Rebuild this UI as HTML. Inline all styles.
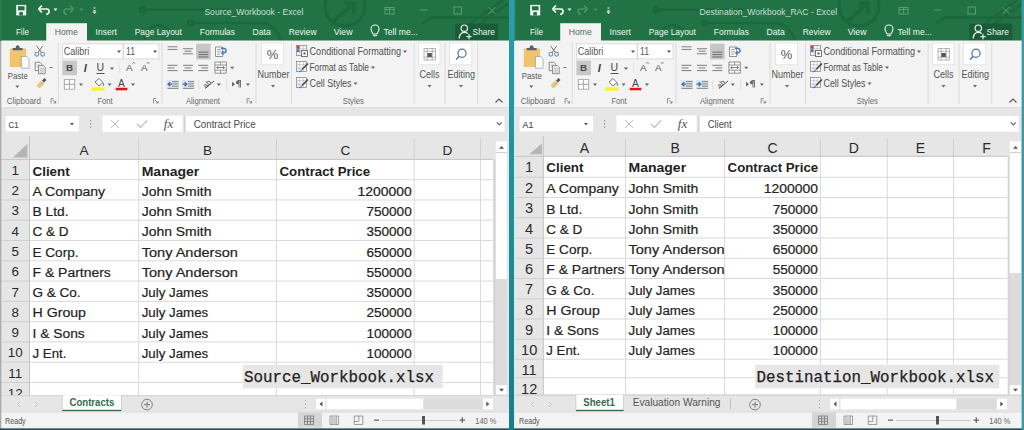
<!DOCTYPE html>
<html><head><meta charset="utf-8"><style>
html,body{margin:0;padding:0;background:#fff;overflow:hidden;width:1024px;height:430px}
svg{display:block}
text{white-space:pre}
</style></head><body>
<svg width="1024" height="430" viewBox="0 0 1024 430" font-family='"Liberation Sans", sans-serif'>
<rect x="0" y="0" width="1024" height="430" fill="#f3f3f3"/>
<g><rect x="0" y="0" width="509" height="41" fill="#217346" />
<g stroke="#1c673d" stroke-width="2.4" fill="none">
<path d="M142.3,9.7 L230,9.7"/><circle cx="142.3" cy="9.7" r="2.6"/>
<path d="M190.6,23 L264,23 Q273,24 282,41"/><circle cx="190.6" cy="23" r="2.6"/>
<path d="M145,41 A13.5,13.5 0 0 1 170,32"/>
<circle cx="345" cy="6" r="20" stroke-width="3"/>
<path d="M334,21 L353,4 M344,3.5 L354,3.5 L354,13.5" stroke-width="3.5"/>
<path d="M422,24 L431,17.5 L509,17.5"/>
<path d="M470,24 L503,0 M480,24 L509,3"/>
</g>
<rect x="16.2" y="4.9" width="10" height="10.5" fill="#f2f7f4" />
<rect x="18" y="6.2" width="6.6" height="4.2" fill="#217346" />
<rect x="19.3" y="12" width="3.6" height="3.4" fill="#217346" />
<path d="M39,9 L47,9 Q49,9 49,11.5 Q49,14 46,14.5" fill="none" stroke="#f2f7f4" stroke-width="1.7"/>
<path d="M38.5,9 L42,5.5 M38.5,9 L42,12.5" fill="none" stroke="#f2f7f4" stroke-width="1.7"/>
<path d="M53.5,8.5 L57.5,8.5 L55.5,11.0 Z" fill="#f2f7f4"/>
<path d="M73,9 L66,9 Q64,9 64,11.5 Q64,14 67,14.5" fill="none" stroke="#4e9169" stroke-width="1.7"/>
<path d="M73.5,9 L70,5.5 M73.5,9 L70,12.5" fill="none" stroke="#4e9169" stroke-width="1.7"/>
<path d="M79.5,8.5 L83.5,8.5 L81.5,11.0 Z" fill="#4e9169"/>
<rect x="93.5" y="7.5" width="2" height="1" fill="#f2f7f4" /><rect x="93.5" y="10" width="2" height="1" fill="#f2f7f4" /><path d="M92.5,11.5 L96.5,11.5 L94.5,14.0 Z" fill="#f2f7f4"/>
<text x="204.4" y="14.8" font-size="9" fill="#c9dfd1" text-anchor="start" font-family='"Liberation Sans", sans-serif' textLength="99.1" lengthAdjust="spacingAndGlyphs" >Source_Workbook - Excel</text>
<g fill="none" stroke="#5d9a76" stroke-width="1">
<rect x="385" y="7.5" width="9" height="6.5"/><path d="M385,9.5 h9 M389.5,7.5 v6.5"/>
<path d="M420,10 h7.5"/>
<rect x="454" y="7" width="7.5" height="7"/>
<path d="M488.5,7 L495.5,14 M495.5,7 L488.5,14"/>
</g>
<rect x="46.2" y="23.2" width="40.8" height="18" fill="#f3f3f3" />
<text x="15.9" y="35.0" font-size="9.3" fill="#eef5f0" text-anchor="start" font-family='"Liberation Sans", sans-serif' textLength="13.1" lengthAdjust="spacingAndGlyphs" >File</text>
<text x="95.6" y="35.0" font-size="9.3" fill="#eef5f0" text-anchor="start" font-family='"Liberation Sans", sans-serif' textLength="21.4" lengthAdjust="spacingAndGlyphs" >Insert</text>
<text x="134.7" y="35.0" font-size="9.3" fill="#eef5f0" text-anchor="start" font-family='"Liberation Sans", sans-serif' textLength="47.2" lengthAdjust="spacingAndGlyphs" >Page Layout</text>
<text x="199.8" y="35.0" font-size="9.3" fill="#eef5f0" text-anchor="start" font-family='"Liberation Sans", sans-serif' textLength="35.2" lengthAdjust="spacingAndGlyphs" >Formulas</text>
<text x="252.5" y="35.0" font-size="9.3" fill="#eef5f0" text-anchor="start" font-family='"Liberation Sans", sans-serif' textLength="18.3" lengthAdjust="spacingAndGlyphs" >Data</text>
<text x="288.7" y="35.0" font-size="9.3" fill="#eef5f0" text-anchor="start" font-family='"Liberation Sans", sans-serif' textLength="27.9" lengthAdjust="spacingAndGlyphs" >Review</text>
<text x="333.7" y="35.0" font-size="9.3" fill="#eef5f0" text-anchor="start" font-family='"Liberation Sans", sans-serif' textLength="18.8" lengthAdjust="spacingAndGlyphs" >View</text>
<text x="383.5" y="35.0" font-size="9.3" fill="#eef5f0" text-anchor="start" font-family='"Liberation Sans", sans-serif' textLength="34.3" lengthAdjust="spacingAndGlyphs" >Tell me...</text>
<text x="54.8" y="35.0" font-size="9.3" fill="#566b5d" text-anchor="start" font-family='"Liberation Sans", sans-serif' textLength="23.1" lengthAdjust="spacingAndGlyphs" >Home</text>
<path d="M373,34 Q371,31 371,29 A4,4 0 0 1 379,29 Q379,31 377,34 Z" fill="none" stroke="#eef5f0" stroke-width="1.1"/>
<rect x="373.2" y="35" width="3.6" height="1.2" fill="#eef5f0" />
<rect x="455.3" y="23.6" width="43" height="16.6" fill="#1a5c37" />
<circle cx="464.3" cy="28.2" r="3.2" fill="none" stroke="#eef5f0" stroke-width="1.2"/>
<path d="M459.2,38.5 Q459.5,32.3 464.3,32.3 Q466.5,32.3 467.8,33.6" fill="none" stroke="#eef5f0" stroke-width="1.2"/>
<rect x="466.3" y="36.1" width="5.4" height="1.1" fill="#eef5f0" /><rect x="468.45" y="33.9" width="1.1" height="5.4" fill="#eef5f0" />
<text x="472.6" y="35.2" font-size="9.6" fill="#eef5f0" text-anchor="start" font-family='"Liberation Sans", sans-serif' textLength="22.2" lengthAdjust="spacingAndGlyphs" >Share</text>
<rect x="0" y="40.5" width="509" height="66.5" fill="#f3f3f3" />
<text x="6.7" y="104.3" font-size="8.8" fill="#6a6a6a" text-anchor="start" font-family='"Liberation Sans", sans-serif' textLength="34.3" lengthAdjust="spacingAndGlyphs" >Clipboard</text>
<text x="97.4" y="104.3" font-size="8.8" fill="#6a6a6a" text-anchor="start" font-family='"Liberation Sans", sans-serif' textLength="15.3" lengthAdjust="spacingAndGlyphs" >Font</text>
<text x="186" y="104.3" font-size="8.8" fill="#6a6a6a" text-anchor="start" font-family='"Liberation Sans", sans-serif' textLength="34" lengthAdjust="spacingAndGlyphs" >Alignment</text>
<text x="342.8" y="104.3" font-size="8.8" fill="#6a6a6a" text-anchor="start" font-family='"Liberation Sans", sans-serif' textLength="21" lengthAdjust="spacingAndGlyphs" >Styles</text>
<rect x="57.8" y="43" width="1" height="61" fill="#dcdcdc" />
<rect x="161.5" y="43" width="1" height="61" fill="#dcdcdc" />
<rect x="255.5" y="43" width="1" height="61" fill="#dcdcdc" />
<rect x="291" y="43" width="1" height="61" fill="#dcdcdc" />
<rect x="413.6" y="43" width="1" height="61" fill="#dcdcdc" />
<rect x="444.6" y="43" width="1" height="61" fill="#dcdcdc" />
<rect x="477.2" y="43" width="1" height="61" fill="#dcdcdc" />
<path d="M51.1,98.5 h2.5 v0 M51.1,98.5 v5 M52.6,100 L55.6,103 M55.6,101 v2 h-2" fill="none" stroke="#777" stroke-width="0.8"/>
<path d="M153.5,98.5 h2.5 v0 M153.5,98.5 v5 M155,100 L158,103 M158,101 v2 h-2" fill="none" stroke="#777" stroke-width="0.8"/>
<path d="M247.1,98.5 h2.5 v0 M247.1,98.5 v5 M248.6,100 L251.6,103 M251.6,101 v2 h-2" fill="none" stroke="#777" stroke-width="0.8"/>
<path d="M495.5,102.5 L499,99 L502.5,102.5" fill="none" stroke="#555" stroke-width="1.1"/>
<rect x="9.8" y="48.4" width="16.3" height="18.6" rx="0.8" fill="#efc46c"/>
<path d="M12.7,50.3 h9.9 v-2.3 h-3 v-1.2 a2,2 0 0 0 -3.9,0 v1.2 h-3 Z" fill="#5a5c68"/>
<path d="M21.4,56.5 h5.3 l2.3,2.3 v9.4 h-7.6 Z" fill="#fff" stroke="#8a8a8a" stroke-width="0.6"/>
<text x="7.8" y="79.2" font-size="9.8" fill="#555" text-anchor="start" font-family='"Liberation Sans", sans-serif' textLength="20" lengthAdjust="spacingAndGlyphs" >Paste</text>
<path d="M15.3,85.5 L19.3,85.5 L17.3,88.0 Z" fill="#666"/>
<g fill="none" stroke="#6f8fb5" stroke-width="1.1"><circle cx="36.8" cy="54.2" r="1.9"/><circle cx="42.6" cy="54.2" r="1.9"/></g>
<path d="M38,52.6 L42.8,45.8 M41.4,52.6 L36.6,45.8" stroke="#707070" stroke-width="1" fill="none"/>
<path d="M35.2,62.3 h4.8 l1.8,1.8 v6.5 h-6.6 Z" fill="#f7f7f7" stroke="#707070" stroke-width="0.8"/>
<path d="M36.5,65 h3.5 M36.5,67 h3.5" stroke="#999" stroke-width="0.6"/>
<path d="M38.6,65.6 h4.8 l1.8,1.8 v6.3 h-6.6 Z" fill="#f7f7f7" stroke="#707070" stroke-width="0.8"/>
<path d="M39.9,68.4 h4 M39.9,70.2 h4 M39.9,72 h4" stroke="#888" stroke-width="0.6"/>
<rect x="49.5" y="67" width="3" height="0.9" fill="#666" />
<path d="M36.5,85.5 L41.5,80.5 L44.5,83.5 L39.5,88.5 Z" fill="#e6c27f"/><path d="M42,80.5 L44.5,78 L46.5,80 L44,82.5 Z" fill="#555"/>
<rect x="62.7" y="43.9" width="60.3" height="15" fill="#fff" stroke="#d4d4d4" stroke-width="0.8"/>
<rect x="123.8" y="43.9" width="35.2" height="15" fill="#fff" stroke="#d4d4d4" stroke-width="0.8"/>
<text x="63.8" y="55" font-size="10" fill="#555" text-anchor="start" font-family='"Liberation Sans", sans-serif' textLength="25.5" lengthAdjust="spacingAndGlyphs" >Calibri</text>
<text x="126" y="55" font-size="10" fill="#555" text-anchor="start" font-family='"Liberation Sans", sans-serif' textLength="9" lengthAdjust="spacingAndGlyphs" >11</text>
<path d="M117,50.5 L121,50.5 L119,53.0 Z" fill="#555"/>
<path d="M153,50.5 L157,50.5 L155,53.0 Z" fill="#555"/>
<rect x="62.4" y="60.6" width="14.6" height="14.6" fill="#c8c8c8" />
<text x="69.5" y="71.3" font-size="9.8" fill="#484848" font-weight="bold" text-anchor="middle" font-family='"Liberation Sans", sans-serif' >B</text>
<text x="85.3" y="71.5" font-size="11" fill="#444" font-weight="bold" text-anchor="middle" font-family='"Liberation Sans", sans-serif' font-style="italic">I</text>
<text x="100.4" y="71" font-size="10.5" fill="#444" text-anchor="middle" font-family='"Liberation Sans", sans-serif' >U</text>
<rect x="96.5" y="73" width="8" height="0.9" fill="#444" />
<path d="M110,67.5 L114,67.5 L112,70.0 Z" fill="#666"/>
<rect x="119.3" y="63" width="0.8" height="10" fill="#ddd" />
<text x="129.3" y="71.3" font-size="9.8" fill="#555" text-anchor="middle" font-family='"Liberation Sans", sans-serif' >A</text>
<text x="144.2" y="71.3" font-size="9.8" fill="#555" text-anchor="middle" font-family='"Liberation Sans", sans-serif' >A</text>
<path d="M132.5,63.5 l1.2,-1.2 l1.2,1.2 M147,62.3 l1.2,1.2 l1.2,-1.2" fill="none" stroke="#555" stroke-width="0.9"/>
<rect x="64.4" y="79.5" width="10.2" height="9.7" fill="#fff"/><path d="M64.4,79.5 h10.2 v9.7 h-10.2 Z M69.5,79.5 v9.7 M64.4,84.35 h10.2" fill="none" stroke="#b0b0b0" stroke-width="1.1"/>
<path d="M79,83.5 L83,83.5 L81,86.0 Z" fill="#666"/>
<path d="M95,82 L99,78.5 L103,82.5 L99,86 Z" fill="#fff" stroke="#666" stroke-width="0.9"/><path d="M103,83 q1.5,2 0,3" fill="#5f86b8" stroke="#5f86b8" stroke-width="1"/>
<rect x="91.3" y="87.3" width="13.1" height="3.4" fill="#f4f42a" />
<path d="M107.6,83.5 L111.6,83.5 L109.6,86.0 Z" fill="#666"/>
<text x="121.3" y="86.5" font-size="10.2" fill="#444" text-anchor="middle" font-family='"Liberation Sans", sans-serif' >A</text>
<rect x="115.7" y="87.8" width="11.7" height="2.5" fill="#e0141c" />
<path d="M131,83.5 L135,83.5 L133,86.0 Z" fill="#666"/>
<rect x="167.5" y="46.2" width="10" height="1.1" fill="#8a8a8a" /><rect x="167.5" y="48.9" width="10" height="1.1" fill="#8a8a8a" />
<rect x="183" y="48.2" width="10" height="1.1" fill="#888" /><rect x="184.5" y="50.7" width="7" height="1.1" fill="#888" /><rect x="183" y="53.2" width="10" height="1.1" fill="#888" />
<rect x="196.1" y="43.7" width="14.6" height="15.7" fill="#c6c6c6" />
<rect x="198.4" y="51.6" width="10" height="1.1" fill="#707070" /><rect x="198.4" y="54" width="10" height="1.1" fill="#707070" /><rect x="198.4" y="56.4" width="10" height="1.1" fill="#707070" />
<path d="M215.5,47 h7.2 v9.5 h-7.2 Z" fill="#fff" stroke="#777" stroke-width="0.8"/><path d="M217,49.5 h4 M217,51.8 h4 M217,54.1 h3" stroke="#888" stroke-width="0.8"/><path d="M221,48.3 q5,-0.5 5.2,2.5 q0,2 -3,2.2" fill="none" stroke="#3e74b4" stroke-width="1.3"/><path d="M223.5,51.2 l-1.8,1.8 l1.8,1.6" fill="none" stroke="#3e74b4" stroke-width="1.1"/>
<rect x="167.5" y="64.8" width="10" height="1.1" fill="#888" /><rect x="167.5" y="67.4" width="7" height="1.1" fill="#888" /><rect x="167.5" y="70" width="10" height="1.1" fill="#888" />
<rect x="183" y="64.8" width="10" height="1.1" fill="#888" /><rect x="184.5" y="67.4" width="7" height="1.1" fill="#888" /><rect x="183" y="70" width="10" height="1.1" fill="#888" />
<rect x="198.3" y="64.8" width="10" height="1.1" fill="#888" /><rect x="201.3" y="67.4" width="7" height="1.1" fill="#888" /><rect x="198.3" y="70" width="10" height="1.1" fill="#888" />
<path d="M214.9,62 h11.4 v11.2 h-11.4 Z M214.9,65 h11.4 M214.9,70.2 h11.4 M220.6,62 v3 M220.6,70.2 v3" fill="#fff" stroke="#777" stroke-width="0.8"/><path d="M216.8,67.6 h7.6 M216.8,67.6 l1.5,-1.3 M216.8,67.6 l1.5,1.3 M224.4,67.6 l-1.5,-1.3 M224.4,67.6 l-1.5,1.3" stroke="#555" stroke-width="0.8" fill="none"/>
<path d="M230.2,66.8 L234.2,66.8 L232.2,69.3 Z" fill="#666"/>
<rect x="166.5" y="80" width="12.5" height="9" fill="#dde6f0" />
<rect x="172" y="81" width="6.5" height="1.1" fill="#8a8a8a" /><rect x="172" y="83.3" width="6.5" height="1.1" fill="#8a8a8a" /><rect x="172" y="85.6" width="6.5" height="1.1" fill="#8a8a8a" />
<rect x="167.5" y="87.9" width="11" height="1" fill="#8a8a8a" />
<path d="M172,84.2 h-4.2 M170.3,82.2 l-2.2,2 l2.2,2" fill="none" stroke="#3b6ea8" stroke-width="1.3"/>
<rect x="182" y="80" width="12.5" height="9" fill="#dde6f0" />
<rect x="188" y="81" width="6" height="1.1" fill="#8a8a8a" /><rect x="188" y="83.3" width="6" height="1.1" fill="#8a8a8a" /><rect x="188" y="85.6" width="6" height="1.1" fill="#8a8a8a" />
<rect x="183" y="87.9" width="11" height="1" fill="#8a8a8a" />
<path d="M182.5,84.2 h4.2 M184.6,82.2 l2.2,2 l-2.2,2" fill="none" stroke="#3b6ea8" stroke-width="1.3"/>
<rect x="198.5" y="79.5" width="0.8" height="10" fill="#dcdcdc" />
<text x="207" y="86.5" font-size="7.5" fill="#555" text-anchor="middle" font-family='"Liberation Sans", sans-serif' transform="rotate(-45 207 84)">ab</text>
<path d="M205,88.5 L214,81" stroke="#555" stroke-width="1"/>
<path d="M216.8,83.5 L220.8,83.5 L218.8,86.0 Z" fill="#666"/>
<rect x="226.4" y="79.5" width="0.8" height="10" fill="#dcdcdc" />
<path d="M232,81.8 l3,2.4 l-3,2.4 Z" fill="#666"/><path d="M237.5,80.5 h3.5 M239,80.5 v7 M240.5,80.5 v7" stroke="#666" stroke-width="0.9"/><circle cx="237.6" cy="82.5" r="1.7" fill="#666"/>
<path d="M245.9,83.5 L249.9,83.5 L247.9,86.0 Z" fill="#666"/>
<rect x="261.7" y="43" width="21.8" height="21.8" fill="#fff" stroke="#e0e0e0" stroke-width="0.8"/>
<text x="272.6" y="59" font-size="13" fill="#555" text-anchor="middle" font-family='"Liberation Sans", sans-serif' >%</text>
<text x="257.5" y="78.3" font-size="10.3" fill="#555" text-anchor="start" font-family='"Liberation Sans", sans-serif' textLength="31.9" lengthAdjust="spacingAndGlyphs" >Number</text>
<path d="M271,85 L275,85 L273,87.5 Z" fill="#666"/>
<rect x="296.5" y="45.5" width="10" height="10" fill="#fff" stroke="#888" stroke-width="0.8"/>
<path d="M296.5,48.8 h10 M296.5,52.1 h10 M299.8,45.5 v10 M303.2,45.5 v10" stroke="#aaa" stroke-width="0.6"/>
<text x="309.5" y="55" font-size="10" fill="#505050" text-anchor="start" font-family='"Liberation Sans", sans-serif' textLength="91.5" lengthAdjust="spacingAndGlyphs" >Conditional Formatting</text>
<path d="M403.0,50.5 L407.0,50.5 L405.0,53.0 Z" fill="#666"/>
<rect x="296.5" y="61.5" width="10" height="10" fill="#fff" stroke="#888" stroke-width="0.8"/>
<path d="M296.5,64.8 h10 M296.5,68.1 h10 M299.8,61.5 v10 M303.2,61.5 v10" stroke="#aaa" stroke-width="0.6"/>
<text x="309.5" y="71" font-size="10" fill="#505050" text-anchor="start" font-family='"Liberation Sans", sans-serif' textLength="59.5" lengthAdjust="spacingAndGlyphs" >Format as Table</text>
<path d="M371.0,66.5 L375.0,66.5 L373.0,69.0 Z" fill="#666"/>
<rect x="296.5" y="77.5" width="10" height="10" fill="#fff" stroke="#888" stroke-width="0.8"/>
<path d="M296.5,80.8 h10 M296.5,84.1 h10 M299.8,77.5 v10 M303.2,77.5 v10" stroke="#aaa" stroke-width="0.6"/>
<text x="309.5" y="87" font-size="10" fill="#505050" text-anchor="start" font-family='"Liberation Sans", sans-serif' textLength="42" lengthAdjust="spacingAndGlyphs" >Cell Styles</text>
<path d="M353.5,82.5 L357.5,82.5 L355.5,85.0 Z" fill="#666"/>
<rect x="297" y="45.8" width="2.6" height="3" fill="#d23b3b" /><rect x="297" y="49.3" width="2.6" height="2.6" fill="#3b78c4" />
<rect x="301.5" y="50.5" width="6" height="6" fill="#fff" stroke="#555" stroke-width="0.8"/><rect x="303.5" y="52.5" width="2" height="2" fill="#555"/>
<path d="M302.5,69.0 L308,63.5" stroke="#444" stroke-width="1.6"/><path d="M299.5,72.0 L302.5,69.0 L301.3,71.0 Z" fill="#3b78c4" stroke="#3b78c4" stroke-width="1"/>
<rect x="297.5" y="67.5" width="4" height="3" fill="#c9daf0" />
<path d="M302.5,85.0 L308,79.5" stroke="#444" stroke-width="1.6"/><path d="M299.5,88.0 L302.5,85.0 L301.3,87.0 Z" fill="#3b78c4" stroke="#3b78c4" stroke-width="1"/>
<rect x="297.5" y="83.5" width="4" height="3" fill="#c9daf0" />
<rect x="418.6" y="43" width="21.4" height="21.8" fill="#fff" stroke="#e0e0e0" stroke-width="0.8"/>
<path d="M424,48.5 h11.5 v11.5 h-11.5 Z M424,51.3 h11.5 M424,57.2 h11.5 M427.2,48.5 v11.5 M432.2,48.5 v11.5" fill="none" stroke="#999" stroke-width="0.7"/><rect x="427.4" y="53" width="4.4" height="4" fill="#555"/>
<text x="429.5" y="78.3" font-size="10.3" fill="#555" text-anchor="middle" font-family='"Liberation Sans", sans-serif' textLength="20" lengthAdjust="spacingAndGlyphs" >Cells</text>
<path d="M427.5,85 L431.5,85 L429.5,87.5 Z" fill="#666"/>
<rect x="449.4" y="43" width="22.4" height="21.8" fill="#fff" stroke="#e0e0e0" stroke-width="0.8"/>
<circle cx="462" cy="53.3" r="4.1" fill="none" stroke="#4f7099" stroke-width="1.2"/><path d="M459.1,56.3 L456.2,59.4" stroke="#4f7099" stroke-width="1.5"/>
<text x="461.2" y="78.3" font-size="10.3" fill="#555" text-anchor="middle" font-family='"Liberation Sans", sans-serif' textLength="27.5" lengthAdjust="spacingAndGlyphs" >Editing</text>
<path d="M459,85 L463,85 L461,87.5 Z" fill="#666"/>
<rect x="0" y="107.6" width="509" height="24.400000000000006" fill="#e6e6e6" />
<rect x="0" y="105.6" width="509" height="1.3" fill="#fbfbfb" />
<rect x="0" y="106.9" width="509" height="0.9" fill="#d9d9d9" />
<rect x="5.1" y="115.6" width="74.4" height="16.3" fill="#fff" stroke="#dedede" stroke-width="0.6"/>
<text x="8.6" y="127.6" font-size="9.4" fill="#505050" text-anchor="start" font-family='"Liberation Sans", sans-serif' textLength="10" lengthAdjust="spacingAndGlyphs" stroke="#505050" stroke-width="0.15">C1</text>
<path d="M70,123 L74,123 L72,125.5 Z" fill="#555"/>
<rect x="90" y="120" width="1.2" height="1.4" fill="#999" /><rect x="90" y="123.2" width="1.2" height="1.4" fill="#999" /><rect x="90" y="126.4" width="1.2" height="1.4" fill="#999" />
<rect x="102.5" y="115.5" width="80" height="16.5" fill="#fff"/>
<path d="M111,120 L119,128 M119,120 L111,128" stroke="#bbb" stroke-width="1"/>
<path d="M137,124 L140.5,127.5 L147,120.5" fill="none" stroke="#bbb" stroke-width="1.2"/>
<text x="163.8" y="127.8" font-size="11.5" fill="#555" text-anchor="start" font-family='"Liberation Serif", serif' textLength="9.5" lengthAdjust="spacingAndGlyphs" font-style="italic">fx</text>
<rect x="184" y="116" width="1" height="16" fill="#d0d0d0" />
<rect x="186" y="116" width="318.5" height="15.6" fill="#fff"/>
<text x="193.7" y="127.7" font-size="10" fill="#4a4a4a" text-anchor="start" font-family='"Liberation Sans", sans-serif' textLength="62" lengthAdjust="spacingAndGlyphs" >Contract Price</text>
<path d="M496.8,122.3 L499.3,124.8 L501.8,122.3" fill="none" stroke="#666" stroke-width="1.2"/>
<rect x="0" y="132" width="509" height="27.400000000000006" fill="#e6e6e6" />
<rect x="29.5" y="159.4" width="463.5" height="235.9" fill="#fff" />
<rect x="0" y="159.4" width="29.5" height="235.9" fill="#e6e6e6" />
<path d="M13,157.5 L27.4,143.8 L27.4,157.5 Z" fill="#b5b5b5"/>
<rect x="29.5" y="179.18" width="463.5" height="1" fill="#dadada" />
<rect x="0" y="179.18" width="29.5" height="1" fill="#d0d0d0" />
<rect x="29.5" y="199.46" width="463.5" height="1" fill="#dadada" />
<rect x="0" y="199.46" width="29.5" height="1" fill="#d0d0d0" />
<rect x="29.5" y="219.74" width="463.5" height="1" fill="#dadada" />
<rect x="0" y="219.74" width="29.5" height="1" fill="#d0d0d0" />
<rect x="29.5" y="240.02" width="463.5" height="1" fill="#dadada" />
<rect x="0" y="240.02" width="29.5" height="1" fill="#d0d0d0" />
<rect x="29.5" y="260.3" width="463.5" height="1" fill="#dadada" />
<rect x="0" y="260.3" width="29.5" height="1" fill="#d0d0d0" />
<rect x="29.5" y="280.58000000000004" width="463.5" height="1" fill="#dadada" />
<rect x="0" y="280.58000000000004" width="29.5" height="1" fill="#d0d0d0" />
<rect x="29.5" y="300.86" width="463.5" height="1" fill="#dadada" />
<rect x="0" y="300.86" width="29.5" height="1" fill="#d0d0d0" />
<rect x="29.5" y="321.14" width="463.5" height="1" fill="#dadada" />
<rect x="0" y="321.14" width="29.5" height="1" fill="#d0d0d0" />
<rect x="29.5" y="341.42" width="463.5" height="1" fill="#dadada" />
<rect x="0" y="341.42" width="29.5" height="1" fill="#d0d0d0" />
<rect x="29.5" y="361.70000000000005" width="463.5" height="1" fill="#dadada" />
<rect x="0" y="361.70000000000005" width="29.5" height="1" fill="#d0d0d0" />
<rect x="29.5" y="381.98" width="463.5" height="1" fill="#dadada" />
<rect x="0" y="381.98" width="29.5" height="1" fill="#d0d0d0" />
<rect x="29.5" y="402.26" width="463.5" height="1" fill="#dadada" />
<rect x="0" y="402.26" width="29.5" height="1" fill="#d0d0d0" />
<rect x="138.2" y="159.4" width="1" height="235.9" fill="#dadada" />
<rect x="138.2" y="139" width="1" height="20.400000000000006" fill="#d0d0d0" />
<rect x="276.0" y="159.4" width="1" height="235.9" fill="#dadada" />
<rect x="276.0" y="139" width="1" height="20.400000000000006" fill="#d0d0d0" />
<rect x="413.7" y="159.4" width="1" height="235.9" fill="#dadada" />
<rect x="413.7" y="139" width="1" height="20.400000000000006" fill="#d0d0d0" />
<rect x="480.0" y="159.4" width="1" height="235.9" fill="#dadada" />
<rect x="480.0" y="139" width="1" height="20.400000000000006" fill="#d0d0d0" />
<rect x="29.0" y="136" width="1" height="259.3" fill="#c4c4c4" />
<rect x="0" y="158.9" width="493" height="1" fill="#c4c4c4" />
<text x="84.1" y="154.8" font-size="13.6" fill="#2a2a2a" text-anchor="middle" font-family='"Liberation Sans", sans-serif' >A</text>
<text x="207.6" y="154.8" font-size="13.6" fill="#2a2a2a" text-anchor="middle" font-family='"Liberation Sans", sans-serif' >B</text>
<text x="345.35" y="154.8" font-size="13.6" fill="#2a2a2a" text-anchor="middle" font-family='"Liberation Sans", sans-serif' >C</text>
<text x="447.35" y="154.8" font-size="13.6" fill="#2a2a2a" text-anchor="middle" font-family='"Liberation Sans", sans-serif' >D</text>
<text x="15.25" y="174.9" font-size="13.4" fill="#2a2a2a" text-anchor="middle" font-family='"Liberation Sans", sans-serif' >1</text>
<text x="15.25" y="195.18" font-size="13.4" fill="#2a2a2a" text-anchor="middle" font-family='"Liberation Sans", sans-serif' >2</text>
<text x="15.25" y="215.46" font-size="13.4" fill="#2a2a2a" text-anchor="middle" font-family='"Liberation Sans", sans-serif' >3</text>
<text x="15.25" y="235.74" font-size="13.4" fill="#2a2a2a" text-anchor="middle" font-family='"Liberation Sans", sans-serif' >4</text>
<text x="15.25" y="256.02" font-size="13.4" fill="#2a2a2a" text-anchor="middle" font-family='"Liberation Sans", sans-serif' >5</text>
<text x="15.25" y="276.3" font-size="13.4" fill="#2a2a2a" text-anchor="middle" font-family='"Liberation Sans", sans-serif' >6</text>
<text x="15.25" y="296.58000000000004" font-size="13.4" fill="#2a2a2a" text-anchor="middle" font-family='"Liberation Sans", sans-serif' >7</text>
<text x="15.25" y="316.86" font-size="13.4" fill="#2a2a2a" text-anchor="middle" font-family='"Liberation Sans", sans-serif' >8</text>
<text x="15.25" y="337.14" font-size="13.4" fill="#2a2a2a" text-anchor="middle" font-family='"Liberation Sans", sans-serif' >9</text>
<text x="15.25" y="357.42" font-size="13.4" fill="#2a2a2a" text-anchor="middle" font-family='"Liberation Sans", sans-serif' >10</text>
<text x="15.25" y="377.70000000000005" font-size="13.4" fill="#2a2a2a" text-anchor="middle" font-family='"Liberation Sans", sans-serif' >11</text>
<text x="15.25" y="397.98" font-size="13.4" fill="#2a2a2a" text-anchor="middle" font-family='"Liberation Sans", sans-serif' >12</text>
<text x="32.5" y="175.5" font-size="13.7" fill="#222" font-weight="bold" text-anchor="start" font-family='"Liberation Sans", sans-serif' textLength="37.2" lengthAdjust="spacingAndGlyphs" >Client</text>
<text x="141.7" y="175.5" font-size="13.7" fill="#222" font-weight="bold" text-anchor="start" font-family='"Liberation Sans", sans-serif' textLength="57.6" lengthAdjust="spacingAndGlyphs" >Manager</text>
<text x="279.5" y="175.5" font-size="13.7" fill="#222" font-weight="bold" text-anchor="start" font-family='"Liberation Sans", sans-serif' textLength="90.6" lengthAdjust="spacingAndGlyphs" >Contract Price</text>
<text x="32.5" y="195.78" font-size="13.7" fill="#222" text-anchor="start" font-family='"Liberation Sans", sans-serif' textLength="72.6" lengthAdjust="spacingAndGlyphs" stroke="#222" stroke-width="0.2">A Company</text>
<text x="141.7" y="195.78" font-size="13.7" fill="#222" text-anchor="start" font-family='"Liberation Sans", sans-serif' textLength="69.8" lengthAdjust="spacingAndGlyphs" stroke="#222" stroke-width="0.2">John Smith</text>
<text x="411.7" y="195.78" font-size="13.7" fill="#222" text-anchor="end" font-family='"Liberation Sans", sans-serif' textLength="54.1" lengthAdjust="spacingAndGlyphs" stroke="#222" stroke-width="0.2">1200000</text>
<text x="32.5" y="216.06" font-size="13.7" fill="#222" text-anchor="start" font-family='"Liberation Sans", sans-serif' textLength="36" lengthAdjust="spacingAndGlyphs" stroke="#222" stroke-width="0.2">B Ltd.</text>
<text x="141.7" y="216.06" font-size="13.7" fill="#222" text-anchor="start" font-family='"Liberation Sans", sans-serif' textLength="69.8" lengthAdjust="spacingAndGlyphs" stroke="#222" stroke-width="0.2">John Smith</text>
<text x="411.7" y="216.06" font-size="13.7" fill="#222" text-anchor="end" font-family='"Liberation Sans", sans-serif' textLength="45.2" lengthAdjust="spacingAndGlyphs" stroke="#222" stroke-width="0.2">750000</text>
<text x="32.5" y="236.34" font-size="13.7" fill="#222" text-anchor="start" font-family='"Liberation Sans", sans-serif' textLength="36" lengthAdjust="spacingAndGlyphs" stroke="#222" stroke-width="0.2">C &amp; D</text>
<text x="141.7" y="236.34" font-size="13.7" fill="#222" text-anchor="start" font-family='"Liberation Sans", sans-serif' textLength="69.8" lengthAdjust="spacingAndGlyphs" stroke="#222" stroke-width="0.2">John Smith</text>
<text x="411.7" y="236.34" font-size="13.7" fill="#222" text-anchor="end" font-family='"Liberation Sans", sans-serif' textLength="45.2" lengthAdjust="spacingAndGlyphs" stroke="#222" stroke-width="0.2">350000</text>
<text x="32.5" y="256.62" font-size="13.7" fill="#222" text-anchor="start" font-family='"Liberation Sans", sans-serif' textLength="46" lengthAdjust="spacingAndGlyphs" stroke="#222" stroke-width="0.2">E Corp.</text>
<text x="141.7" y="256.62" font-size="13.7" fill="#222" text-anchor="start" font-family='"Liberation Sans", sans-serif' textLength="96.2" lengthAdjust="spacingAndGlyphs" stroke="#222" stroke-width="0.2">Tony Anderson</text>
<text x="411.7" y="256.62" font-size="13.7" fill="#222" text-anchor="end" font-family='"Liberation Sans", sans-serif' textLength="45.2" lengthAdjust="spacingAndGlyphs" stroke="#222" stroke-width="0.2">650000</text>
<text x="32.5" y="276.90000000000003" font-size="13.7" fill="#222" text-anchor="start" font-family='"Liberation Sans", sans-serif' textLength="78.3" lengthAdjust="spacingAndGlyphs" stroke="#222" stroke-width="0.2">F &amp; Partners</text>
<text x="141.7" y="276.90000000000003" font-size="13.7" fill="#222" text-anchor="start" font-family='"Liberation Sans", sans-serif' textLength="96.2" lengthAdjust="spacingAndGlyphs" stroke="#222" stroke-width="0.2">Tony Anderson</text>
<text x="411.7" y="276.90000000000003" font-size="13.7" fill="#222" text-anchor="end" font-family='"Liberation Sans", sans-serif' textLength="45.2" lengthAdjust="spacingAndGlyphs" stroke="#222" stroke-width="0.2">550000</text>
<text x="32.5" y="297.18000000000006" font-size="13.7" fill="#222" text-anchor="start" font-family='"Liberation Sans", sans-serif' textLength="48.1" lengthAdjust="spacingAndGlyphs" stroke="#222" stroke-width="0.2">G &amp; Co.</text>
<text x="141.7" y="297.18000000000006" font-size="13.7" fill="#222" text-anchor="start" font-family='"Liberation Sans", sans-serif' textLength="66.5" lengthAdjust="spacingAndGlyphs" stroke="#222" stroke-width="0.2">July James</text>
<text x="411.7" y="297.18000000000006" font-size="13.7" fill="#222" text-anchor="end" font-family='"Liberation Sans", sans-serif' textLength="45.2" lengthAdjust="spacingAndGlyphs" stroke="#222" stroke-width="0.2">350000</text>
<text x="32.5" y="317.46000000000004" font-size="13.7" fill="#222" text-anchor="start" font-family='"Liberation Sans", sans-serif' textLength="53.5" lengthAdjust="spacingAndGlyphs" stroke="#222" stroke-width="0.2">H Group</text>
<text x="141.7" y="317.46000000000004" font-size="13.7" fill="#222" text-anchor="start" font-family='"Liberation Sans", sans-serif' textLength="66.5" lengthAdjust="spacingAndGlyphs" stroke="#222" stroke-width="0.2">July James</text>
<text x="411.7" y="317.46000000000004" font-size="13.7" fill="#222" text-anchor="end" font-family='"Liberation Sans", sans-serif' textLength="45.2" lengthAdjust="spacingAndGlyphs" stroke="#222" stroke-width="0.2">250000</text>
<text x="32.5" y="337.74" font-size="13.7" fill="#222" text-anchor="start" font-family='"Liberation Sans", sans-serif' textLength="52.3" lengthAdjust="spacingAndGlyphs" stroke="#222" stroke-width="0.2">I &amp; Sons</text>
<text x="141.7" y="337.74" font-size="13.7" fill="#222" text-anchor="start" font-family='"Liberation Sans", sans-serif' textLength="66.5" lengthAdjust="spacingAndGlyphs" stroke="#222" stroke-width="0.2">July James</text>
<text x="411.7" y="337.74" font-size="13.7" fill="#222" text-anchor="end" font-family='"Liberation Sans", sans-serif' textLength="45.2" lengthAdjust="spacingAndGlyphs" stroke="#222" stroke-width="0.2">100000</text>
<text x="32.5" y="358.02000000000004" font-size="13.7" fill="#222" text-anchor="start" font-family='"Liberation Sans", sans-serif' textLength="33.9" lengthAdjust="spacingAndGlyphs" stroke="#222" stroke-width="0.2">J Ent.</text>
<text x="141.7" y="358.02000000000004" font-size="13.7" fill="#222" text-anchor="start" font-family='"Liberation Sans", sans-serif' textLength="66.5" lengthAdjust="spacingAndGlyphs" stroke="#222" stroke-width="0.2">July James</text>
<text x="411.7" y="358.02000000000004" font-size="13.7" fill="#222" text-anchor="end" font-family='"Liberation Sans", sans-serif' textLength="45.2" lengthAdjust="spacingAndGlyphs" stroke="#222" stroke-width="0.2">100000</text>
<rect x="493" y="132" width="16" height="263.3" fill="#e6e6e6" />
<rect x="493.5" y="159.4" width="2.3000000000000114" height="235.9" fill="#d4d4d4" />
<rect x="495.8" y="141.2" width="11" height="253.60000000000002" fill="#dcdcdc" />
<rect x="495.8" y="141.2" width="11" height="11.1" fill="#fff" />
<rect x="495.8" y="152.3" width="11" height="0.8" fill="#c8c8c8" />
<rect x="495.8" y="153.1" width="11" height="125.9" fill="#fff" />
<rect x="495.8" y="385.2" width="11" height="9.3" fill="#fff" />
<path d="M499.0,148.7 L501.5,146 L504.0,148.7 Z" fill="#555"/>
<path d="M499.0,388.8 L501.5,391.5 L504.0,388.8 Z" fill="#555"/>
<rect x="242.9" y="364.8" width="199.79999999999998" height="23.5" fill="#e6e6e6" />
<text x="244.1" y="381.9" font-size="15.8" fill="#222" text-anchor="start" font-family='"Liberation Mono", monospace' textLength="190" lengthAdjust="spacingAndGlyphs" stroke="#222" stroke-width="0.25">Source_Workbook.xlsx</text>
<rect x="0" y="395.3" width="509" height="17.099999999999966" fill="#e6e6e6" />
<rect x="0" y="395.3" width="509" height="0.8" fill="#cfcfcf" />
<path d="M20,402 L17.5,404.5 L20,407" fill="none" stroke="#c4c4c4" stroke-width="1"/>
<path d="M35,402 L37.5,404.5 L35,407" fill="none" stroke="#c4c4c4" stroke-width="1"/>
<rect x="62.3" y="395.3" width="59.0" height="15.5" fill="#fff" />
<rect x="61.8" y="395.3" width="0.8" height="15.5" fill="#c8c8c8" /><rect x="121.0" y="395.3" width="0.8" height="15.5" fill="#c8c8c8" />
<rect x="62.3" y="409.8" width="59.0" height="1.4" fill="#2f6b4b" />
<text x="69.5" y="405.7" font-size="10.3" fill="#356b4f" font-weight="bold" text-anchor="start" font-family='"Liberation Sans", sans-serif' textLength="44.8" lengthAdjust="spacingAndGlyphs" >Contracts</text>
<circle cx="147" cy="404.6" r="5.3" fill="none" stroke="#777" stroke-width="0.9"/><path d="M144,404.6 h6 M147,401.6 v6" stroke="#777" stroke-width="1"/>
<rect x="305" y="400" width="1" height="1.3" fill="#aaa" /><rect x="305" y="403.5" width="1" height="1.3" fill="#aaa" /><rect x="305" y="407" width="1" height="1.3" fill="#aaa" />
<rect x="316.2" y="398.6" width="177" height="10.7" fill="#dcdcdc" />
<rect x="316.2" y="398.6" width="9.1" height="10.7" fill="#fff" />
<rect x="326.4" y="398.6" width="96.80000000000001" height="10.7" fill="#fff" />
<rect x="482.8" y="398.6" width="10.2" height="10.7" fill="#fff" />
<path d="M322.5,401.5 L319.5,404 L322.5,406.5 Z" fill="#555"/>
<path d="M486.3,401.5 L489.3,404 L486.3,406.5 Z" fill="#555"/>
<rect x="0" y="412.4" width="509" height="16" fill="#f3f3f3" />
<rect x="0" y="411.6" width="509" height="0.8" fill="#dadada" />
<rect x="0" y="427.2" width="509" height="1.2" fill="#e9f0f3" />
<text x="5" y="424" font-size="9" fill="#555" text-anchor="start" font-family='"Liberation Sans", sans-serif' textLength="20.7" lengthAdjust="spacingAndGlyphs" >Ready</text>
<rect x="298" y="412.4" width="24" height="15.2" fill="#d5d5d5" />
<path d="M304.5,416 h9 v8.5 h-9 Z M304.5,418.8 h9 M304.5,421.6 h9 M307.5,416 v8.5 M310.5,416 v8.5" fill="none" stroke="#777" stroke-width="0.8"/>
<path d="M330,416 h8.5 v8.5 h-8.5 Z M332,416 v8.5 M336.5,416 v8.5" fill="none" stroke="#888" stroke-width="0.8"/><rect x="332" y="416.5" width="4.5" height="7.5" fill="#ccc"/>
<path d="M354.3,416 h8.5 v8.5 h-8.5 Z M354.3,421.5 h4.5 v-5.5" fill="none" stroke="#888" stroke-width="0.8"/>
<rect x="374" y="419.6" width="5" height="1.1" fill="#555" />
<rect x="382" y="420" width="74.7" height="0.8" fill="#bdbdbd" />
<rect x="422" y="416" width="3" height="8.5" fill="#555" />
<rect x="459.5" y="419.6" width="5.5" height="1.1" fill="#555" /><rect x="461.7" y="417.3" width="1.1" height="5.6" fill="#555" />
<text x="475.3" y="424" font-size="9" fill="#666" text-anchor="start" font-family='"Liberation Sans", sans-serif' textLength="21.1" lengthAdjust="spacingAndGlyphs" >140 %</text>
<rect x="0" y="0" width="1.3" height="41" fill="#2f7a52" />
<rect x="0" y="41" width="1.3" height="388" fill="#a9a9a9" />
<rect x="0" y="428.4" width="509" height="1.6" fill="#2b4a55" /></g>
<defs><linearGradient id="tg" x1="0" y1="0" x2="0" y2="1"><stop offset="0" stop-color="#2a9db0"/><stop offset="0.5" stop-color="#1a9097"/><stop offset="1" stop-color="#14808c"/></linearGradient></defs>
<rect x="509" y="0" width="5" height="430" fill="url(#tg)"/>
<g transform="translate(514,0)"><rect x="0" y="0" width="510" height="41" fill="#217346" />
<g stroke="#1c673d" stroke-width="2.4" fill="none">
<path d="M142.3,9.7 L230,9.7"/><circle cx="142.3" cy="9.7" r="2.6"/>
<path d="M190.6,23 L264,23 Q273,24 282,41"/><circle cx="190.6" cy="23" r="2.6"/>
<path d="M145,41 A13.5,13.5 0 0 1 170,32"/>
<circle cx="345" cy="6" r="20" stroke-width="3"/>
<path d="M334,21 L353,4 M344,3.5 L354,3.5 L354,13.5" stroke-width="3.5"/>
<path d="M422,24 L431,17.5 L509,17.5"/>
<path d="M470,24 L503,0 M480,24 L509,3"/>
</g>
<rect x="16.2" y="4.9" width="10" height="10.5" fill="#f2f7f4" />
<rect x="18" y="6.2" width="6.6" height="4.2" fill="#217346" />
<rect x="19.3" y="12" width="3.6" height="3.4" fill="#217346" />
<path d="M39,9 L47,9 Q49,9 49,11.5 Q49,14 46,14.5" fill="none" stroke="#f2f7f4" stroke-width="1.7"/>
<path d="M38.5,9 L42,5.5 M38.5,9 L42,12.5" fill="none" stroke="#f2f7f4" stroke-width="1.7"/>
<path d="M53.5,8.5 L57.5,8.5 L55.5,11.0 Z" fill="#f2f7f4"/>
<path d="M73,9 L66,9 Q64,9 64,11.5 Q64,14 67,14.5" fill="none" stroke="#4e9169" stroke-width="1.7"/>
<path d="M73.5,9 L70,5.5 M73.5,9 L70,12.5" fill="none" stroke="#4e9169" stroke-width="1.7"/>
<path d="M79.5,8.5 L83.5,8.5 L81.5,11.0 Z" fill="#4e9169"/>
<rect x="93.5" y="7.5" width="2" height="1" fill="#f2f7f4" /><rect x="93.5" y="10" width="2" height="1" fill="#f2f7f4" /><path d="M92.5,11.5 L96.5,11.5 L94.5,14.0 Z" fill="#f2f7f4"/>
<text x="185.6" y="14.8" font-size="9" fill="#c9dfd1" text-anchor="start" font-family='"Liberation Sans", sans-serif' textLength="137.5" lengthAdjust="spacingAndGlyphs" >Destination_Workbook_RAC - Excel</text>
<g fill="none" stroke="#5d9a76" stroke-width="1">
<rect x="385" y="7.5" width="9" height="6.5"/><path d="M385,9.5 h9 M389.5,7.5 v6.5"/>
<path d="M420,10 h7.5"/>
<rect x="454" y="7" width="7.5" height="7"/>
<path d="M488.5,7 L495.5,14 M495.5,7 L488.5,14"/>
</g>
<rect x="46.2" y="23.2" width="40.8" height="18" fill="#f3f3f3" />
<text x="15.9" y="35.0" font-size="9.3" fill="#eef5f0" text-anchor="start" font-family='"Liberation Sans", sans-serif' textLength="13.1" lengthAdjust="spacingAndGlyphs" >File</text>
<text x="95.6" y="35.0" font-size="9.3" fill="#eef5f0" text-anchor="start" font-family='"Liberation Sans", sans-serif' textLength="21.4" lengthAdjust="spacingAndGlyphs" >Insert</text>
<text x="134.7" y="35.0" font-size="9.3" fill="#eef5f0" text-anchor="start" font-family='"Liberation Sans", sans-serif' textLength="47.2" lengthAdjust="spacingAndGlyphs" >Page Layout</text>
<text x="199.8" y="35.0" font-size="9.3" fill="#eef5f0" text-anchor="start" font-family='"Liberation Sans", sans-serif' textLength="35.2" lengthAdjust="spacingAndGlyphs" >Formulas</text>
<text x="252.5" y="35.0" font-size="9.3" fill="#eef5f0" text-anchor="start" font-family='"Liberation Sans", sans-serif' textLength="18.3" lengthAdjust="spacingAndGlyphs" >Data</text>
<text x="288.7" y="35.0" font-size="9.3" fill="#eef5f0" text-anchor="start" font-family='"Liberation Sans", sans-serif' textLength="27.9" lengthAdjust="spacingAndGlyphs" >Review</text>
<text x="333.7" y="35.0" font-size="9.3" fill="#eef5f0" text-anchor="start" font-family='"Liberation Sans", sans-serif' textLength="18.8" lengthAdjust="spacingAndGlyphs" >View</text>
<text x="383.5" y="35.0" font-size="9.3" fill="#eef5f0" text-anchor="start" font-family='"Liberation Sans", sans-serif' textLength="34.3" lengthAdjust="spacingAndGlyphs" >Tell me...</text>
<text x="54.8" y="35.0" font-size="9.3" fill="#566b5d" text-anchor="start" font-family='"Liberation Sans", sans-serif' textLength="23.1" lengthAdjust="spacingAndGlyphs" >Home</text>
<path d="M373,34 Q371,31 371,29 A4,4 0 0 1 379,29 Q379,31 377,34 Z" fill="none" stroke="#eef5f0" stroke-width="1.1"/>
<rect x="373.2" y="35" width="3.6" height="1.2" fill="#eef5f0" />
<rect x="455.3" y="23.6" width="43" height="16.6" fill="#1a5c37" />
<circle cx="464.3" cy="28.2" r="3.2" fill="none" stroke="#eef5f0" stroke-width="1.2"/>
<path d="M459.2,38.5 Q459.5,32.3 464.3,32.3 Q466.5,32.3 467.8,33.6" fill="none" stroke="#eef5f0" stroke-width="1.2"/>
<rect x="466.3" y="36.1" width="5.4" height="1.1" fill="#eef5f0" /><rect x="468.45" y="33.9" width="1.1" height="5.4" fill="#eef5f0" />
<text x="472.6" y="35.2" font-size="9.6" fill="#eef5f0" text-anchor="start" font-family='"Liberation Sans", sans-serif' textLength="22.2" lengthAdjust="spacingAndGlyphs" >Share</text>
<rect x="0" y="40.5" width="510" height="66.5" fill="#f3f3f3" />
<text x="6.7" y="104.3" font-size="8.8" fill="#6a6a6a" text-anchor="start" font-family='"Liberation Sans", sans-serif' textLength="34.3" lengthAdjust="spacingAndGlyphs" >Clipboard</text>
<text x="97.4" y="104.3" font-size="8.8" fill="#6a6a6a" text-anchor="start" font-family='"Liberation Sans", sans-serif' textLength="15.3" lengthAdjust="spacingAndGlyphs" >Font</text>
<text x="186" y="104.3" font-size="8.8" fill="#6a6a6a" text-anchor="start" font-family='"Liberation Sans", sans-serif' textLength="34" lengthAdjust="spacingAndGlyphs" >Alignment</text>
<text x="342.8" y="104.3" font-size="8.8" fill="#6a6a6a" text-anchor="start" font-family='"Liberation Sans", sans-serif' textLength="21" lengthAdjust="spacingAndGlyphs" >Styles</text>
<rect x="57.8" y="43" width="1" height="61" fill="#dcdcdc" />
<rect x="161.5" y="43" width="1" height="61" fill="#dcdcdc" />
<rect x="255.5" y="43" width="1" height="61" fill="#dcdcdc" />
<rect x="291" y="43" width="1" height="61" fill="#dcdcdc" />
<rect x="413.6" y="43" width="1" height="61" fill="#dcdcdc" />
<rect x="444.6" y="43" width="1" height="61" fill="#dcdcdc" />
<rect x="477.2" y="43" width="1" height="61" fill="#dcdcdc" />
<path d="M51.1,98.5 h2.5 v0 M51.1,98.5 v5 M52.6,100 L55.6,103 M55.6,101 v2 h-2" fill="none" stroke="#777" stroke-width="0.8"/>
<path d="M153.5,98.5 h2.5 v0 M153.5,98.5 v5 M155,100 L158,103 M158,101 v2 h-2" fill="none" stroke="#777" stroke-width="0.8"/>
<path d="M247.1,98.5 h2.5 v0 M247.1,98.5 v5 M248.6,100 L251.6,103 M251.6,101 v2 h-2" fill="none" stroke="#777" stroke-width="0.8"/>
<path d="M495.5,102.5 L499,99 L502.5,102.5" fill="none" stroke="#555" stroke-width="1.1"/>
<rect x="9.8" y="48.4" width="16.3" height="18.6" rx="0.8" fill="#efc46c"/>
<path d="M12.7,50.3 h9.9 v-2.3 h-3 v-1.2 a2,2 0 0 0 -3.9,0 v1.2 h-3 Z" fill="#5a5c68"/>
<path d="M21.4,56.5 h5.3 l2.3,2.3 v9.4 h-7.6 Z" fill="#fff" stroke="#8a8a8a" stroke-width="0.6"/>
<text x="7.8" y="79.2" font-size="9.8" fill="#555" text-anchor="start" font-family='"Liberation Sans", sans-serif' textLength="20" lengthAdjust="spacingAndGlyphs" >Paste</text>
<path d="M15.3,85.5 L19.3,85.5 L17.3,88.0 Z" fill="#666"/>
<g fill="none" stroke="#6f8fb5" stroke-width="1.1"><circle cx="36.8" cy="54.2" r="1.9"/><circle cx="42.6" cy="54.2" r="1.9"/></g>
<path d="M38,52.6 L42.8,45.8 M41.4,52.6 L36.6,45.8" stroke="#707070" stroke-width="1" fill="none"/>
<path d="M35.2,62.3 h4.8 l1.8,1.8 v6.5 h-6.6 Z" fill="#f7f7f7" stroke="#707070" stroke-width="0.8"/>
<path d="M36.5,65 h3.5 M36.5,67 h3.5" stroke="#999" stroke-width="0.6"/>
<path d="M38.6,65.6 h4.8 l1.8,1.8 v6.3 h-6.6 Z" fill="#f7f7f7" stroke="#707070" stroke-width="0.8"/>
<path d="M39.9,68.4 h4 M39.9,70.2 h4 M39.9,72 h4" stroke="#888" stroke-width="0.6"/>
<rect x="49.5" y="67" width="3" height="0.9" fill="#666" />
<path d="M36.5,85.5 L41.5,80.5 L44.5,83.5 L39.5,88.5 Z" fill="#e6c27f"/><path d="M42,80.5 L44.5,78 L46.5,80 L44,82.5 Z" fill="#555"/>
<rect x="62.7" y="43.9" width="60.3" height="15" fill="#fff" stroke="#d4d4d4" stroke-width="0.8"/>
<rect x="123.8" y="43.9" width="35.2" height="15" fill="#fff" stroke="#d4d4d4" stroke-width="0.8"/>
<text x="63.8" y="55" font-size="10" fill="#555" text-anchor="start" font-family='"Liberation Sans", sans-serif' textLength="25.5" lengthAdjust="spacingAndGlyphs" >Calibri</text>
<text x="126" y="55" font-size="10" fill="#555" text-anchor="start" font-family='"Liberation Sans", sans-serif' textLength="9" lengthAdjust="spacingAndGlyphs" >11</text>
<path d="M117,50.5 L121,50.5 L119,53.0 Z" fill="#555"/>
<path d="M153,50.5 L157,50.5 L155,53.0 Z" fill="#555"/>
<rect x="62.4" y="60.6" width="14.6" height="14.6" fill="#c8c8c8" />
<text x="69.5" y="71.3" font-size="9.8" fill="#484848" font-weight="bold" text-anchor="middle" font-family='"Liberation Sans", sans-serif' >B</text>
<text x="85.3" y="71.5" font-size="11" fill="#444" font-weight="bold" text-anchor="middle" font-family='"Liberation Sans", sans-serif' font-style="italic">I</text>
<text x="100.4" y="71" font-size="10.5" fill="#444" text-anchor="middle" font-family='"Liberation Sans", sans-serif' >U</text>
<rect x="96.5" y="73" width="8" height="0.9" fill="#444" />
<path d="M110,67.5 L114,67.5 L112,70.0 Z" fill="#666"/>
<rect x="119.3" y="63" width="0.8" height="10" fill="#ddd" />
<text x="129.3" y="71.3" font-size="9.8" fill="#555" text-anchor="middle" font-family='"Liberation Sans", sans-serif' >A</text>
<text x="144.2" y="71.3" font-size="9.8" fill="#555" text-anchor="middle" font-family='"Liberation Sans", sans-serif' >A</text>
<path d="M132.5,63.5 l1.2,-1.2 l1.2,1.2 M147,62.3 l1.2,1.2 l1.2,-1.2" fill="none" stroke="#555" stroke-width="0.9"/>
<rect x="64.4" y="79.5" width="10.2" height="9.7" fill="#fff"/><path d="M64.4,79.5 h10.2 v9.7 h-10.2 Z M69.5,79.5 v9.7 M64.4,84.35 h10.2" fill="none" stroke="#b0b0b0" stroke-width="1.1"/>
<path d="M79,83.5 L83,83.5 L81,86.0 Z" fill="#666"/>
<path d="M95,82 L99,78.5 L103,82.5 L99,86 Z" fill="#fff" stroke="#666" stroke-width="0.9"/><path d="M103,83 q1.5,2 0,3" fill="#5f86b8" stroke="#5f86b8" stroke-width="1"/>
<rect x="91.3" y="87.3" width="13.1" height="3.4" fill="#f4f42a" />
<path d="M107.6,83.5 L111.6,83.5 L109.6,86.0 Z" fill="#666"/>
<text x="121.3" y="86.5" font-size="10.2" fill="#444" text-anchor="middle" font-family='"Liberation Sans", sans-serif' >A</text>
<rect x="115.7" y="87.8" width="11.7" height="2.5" fill="#e0141c" />
<path d="M131,83.5 L135,83.5 L133,86.0 Z" fill="#666"/>
<rect x="167.5" y="46.2" width="10" height="1.1" fill="#8a8a8a" /><rect x="167.5" y="48.9" width="10" height="1.1" fill="#8a8a8a" />
<rect x="183" y="48.2" width="10" height="1.1" fill="#888" /><rect x="184.5" y="50.7" width="7" height="1.1" fill="#888" /><rect x="183" y="53.2" width="10" height="1.1" fill="#888" />
<rect x="196.1" y="43.7" width="14.6" height="15.7" fill="#c6c6c6" />
<rect x="198.4" y="51.6" width="10" height="1.1" fill="#707070" /><rect x="198.4" y="54" width="10" height="1.1" fill="#707070" /><rect x="198.4" y="56.4" width="10" height="1.1" fill="#707070" />
<path d="M215.5,47 h7.2 v9.5 h-7.2 Z" fill="#fff" stroke="#777" stroke-width="0.8"/><path d="M217,49.5 h4 M217,51.8 h4 M217,54.1 h3" stroke="#888" stroke-width="0.8"/><path d="M221,48.3 q5,-0.5 5.2,2.5 q0,2 -3,2.2" fill="none" stroke="#3e74b4" stroke-width="1.3"/><path d="M223.5,51.2 l-1.8,1.8 l1.8,1.6" fill="none" stroke="#3e74b4" stroke-width="1.1"/>
<rect x="167.5" y="64.8" width="10" height="1.1" fill="#888" /><rect x="167.5" y="67.4" width="7" height="1.1" fill="#888" /><rect x="167.5" y="70" width="10" height="1.1" fill="#888" />
<rect x="183" y="64.8" width="10" height="1.1" fill="#888" /><rect x="184.5" y="67.4" width="7" height="1.1" fill="#888" /><rect x="183" y="70" width="10" height="1.1" fill="#888" />
<rect x="198.3" y="64.8" width="10" height="1.1" fill="#888" /><rect x="201.3" y="67.4" width="7" height="1.1" fill="#888" /><rect x="198.3" y="70" width="10" height="1.1" fill="#888" />
<path d="M214.9,62 h11.4 v11.2 h-11.4 Z M214.9,65 h11.4 M214.9,70.2 h11.4 M220.6,62 v3 M220.6,70.2 v3" fill="#fff" stroke="#777" stroke-width="0.8"/><path d="M216.8,67.6 h7.6 M216.8,67.6 l1.5,-1.3 M216.8,67.6 l1.5,1.3 M224.4,67.6 l-1.5,-1.3 M224.4,67.6 l-1.5,1.3" stroke="#555" stroke-width="0.8" fill="none"/>
<path d="M230.2,66.8 L234.2,66.8 L232.2,69.3 Z" fill="#666"/>
<rect x="166.5" y="80" width="12.5" height="9" fill="#dde6f0" />
<rect x="172" y="81" width="6.5" height="1.1" fill="#8a8a8a" /><rect x="172" y="83.3" width="6.5" height="1.1" fill="#8a8a8a" /><rect x="172" y="85.6" width="6.5" height="1.1" fill="#8a8a8a" />
<rect x="167.5" y="87.9" width="11" height="1" fill="#8a8a8a" />
<path d="M172,84.2 h-4.2 M170.3,82.2 l-2.2,2 l2.2,2" fill="none" stroke="#3b6ea8" stroke-width="1.3"/>
<rect x="182" y="80" width="12.5" height="9" fill="#dde6f0" />
<rect x="188" y="81" width="6" height="1.1" fill="#8a8a8a" /><rect x="188" y="83.3" width="6" height="1.1" fill="#8a8a8a" /><rect x="188" y="85.6" width="6" height="1.1" fill="#8a8a8a" />
<rect x="183" y="87.9" width="11" height="1" fill="#8a8a8a" />
<path d="M182.5,84.2 h4.2 M184.6,82.2 l2.2,2 l-2.2,2" fill="none" stroke="#3b6ea8" stroke-width="1.3"/>
<rect x="198.5" y="79.5" width="0.8" height="10" fill="#dcdcdc" />
<text x="207" y="86.5" font-size="7.5" fill="#555" text-anchor="middle" font-family='"Liberation Sans", sans-serif' transform="rotate(-45 207 84)">ab</text>
<path d="M205,88.5 L214,81" stroke="#555" stroke-width="1"/>
<path d="M216.8,83.5 L220.8,83.5 L218.8,86.0 Z" fill="#666"/>
<rect x="226.4" y="79.5" width="0.8" height="10" fill="#dcdcdc" />
<path d="M232,81.8 l3,2.4 l-3,2.4 Z" fill="#666"/><path d="M237.5,80.5 h3.5 M239,80.5 v7 M240.5,80.5 v7" stroke="#666" stroke-width="0.9"/><circle cx="237.6" cy="82.5" r="1.7" fill="#666"/>
<path d="M245.9,83.5 L249.9,83.5 L247.9,86.0 Z" fill="#666"/>
<rect x="261.7" y="43" width="21.8" height="21.8" fill="#fff" stroke="#e0e0e0" stroke-width="0.8"/>
<text x="272.6" y="59" font-size="13" fill="#555" text-anchor="middle" font-family='"Liberation Sans", sans-serif' >%</text>
<text x="257.5" y="78.3" font-size="10.3" fill="#555" text-anchor="start" font-family='"Liberation Sans", sans-serif' textLength="31.9" lengthAdjust="spacingAndGlyphs" >Number</text>
<path d="M271,85 L275,85 L273,87.5 Z" fill="#666"/>
<rect x="296.5" y="45.5" width="10" height="10" fill="#fff" stroke="#888" stroke-width="0.8"/>
<path d="M296.5,48.8 h10 M296.5,52.1 h10 M299.8,45.5 v10 M303.2,45.5 v10" stroke="#aaa" stroke-width="0.6"/>
<text x="309.5" y="55" font-size="10" fill="#505050" text-anchor="start" font-family='"Liberation Sans", sans-serif' textLength="91.5" lengthAdjust="spacingAndGlyphs" >Conditional Formatting</text>
<path d="M403.0,50.5 L407.0,50.5 L405.0,53.0 Z" fill="#666"/>
<rect x="296.5" y="61.5" width="10" height="10" fill="#fff" stroke="#888" stroke-width="0.8"/>
<path d="M296.5,64.8 h10 M296.5,68.1 h10 M299.8,61.5 v10 M303.2,61.5 v10" stroke="#aaa" stroke-width="0.6"/>
<text x="309.5" y="71" font-size="10" fill="#505050" text-anchor="start" font-family='"Liberation Sans", sans-serif' textLength="59.5" lengthAdjust="spacingAndGlyphs" >Format as Table</text>
<path d="M371.0,66.5 L375.0,66.5 L373.0,69.0 Z" fill="#666"/>
<rect x="296.5" y="77.5" width="10" height="10" fill="#fff" stroke="#888" stroke-width="0.8"/>
<path d="M296.5,80.8 h10 M296.5,84.1 h10 M299.8,77.5 v10 M303.2,77.5 v10" stroke="#aaa" stroke-width="0.6"/>
<text x="309.5" y="87" font-size="10" fill="#505050" text-anchor="start" font-family='"Liberation Sans", sans-serif' textLength="42" lengthAdjust="spacingAndGlyphs" >Cell Styles</text>
<path d="M353.5,82.5 L357.5,82.5 L355.5,85.0 Z" fill="#666"/>
<rect x="297" y="45.8" width="2.6" height="3" fill="#d23b3b" /><rect x="297" y="49.3" width="2.6" height="2.6" fill="#3b78c4" />
<rect x="301.5" y="50.5" width="6" height="6" fill="#fff" stroke="#555" stroke-width="0.8"/><rect x="303.5" y="52.5" width="2" height="2" fill="#555"/>
<path d="M302.5,69.0 L308,63.5" stroke="#444" stroke-width="1.6"/><path d="M299.5,72.0 L302.5,69.0 L301.3,71.0 Z" fill="#3b78c4" stroke="#3b78c4" stroke-width="1"/>
<rect x="297.5" y="67.5" width="4" height="3" fill="#c9daf0" />
<path d="M302.5,85.0 L308,79.5" stroke="#444" stroke-width="1.6"/><path d="M299.5,88.0 L302.5,85.0 L301.3,87.0 Z" fill="#3b78c4" stroke="#3b78c4" stroke-width="1"/>
<rect x="297.5" y="83.5" width="4" height="3" fill="#c9daf0" />
<rect x="418.6" y="43" width="21.4" height="21.8" fill="#fff" stroke="#e0e0e0" stroke-width="0.8"/>
<path d="M424,48.5 h11.5 v11.5 h-11.5 Z M424,51.3 h11.5 M424,57.2 h11.5 M427.2,48.5 v11.5 M432.2,48.5 v11.5" fill="none" stroke="#999" stroke-width="0.7"/><rect x="427.4" y="53" width="4.4" height="4" fill="#555"/>
<text x="429.5" y="78.3" font-size="10.3" fill="#555" text-anchor="middle" font-family='"Liberation Sans", sans-serif' textLength="20" lengthAdjust="spacingAndGlyphs" >Cells</text>
<path d="M427.5,85 L431.5,85 L429.5,87.5 Z" fill="#666"/>
<rect x="449.4" y="43" width="22.4" height="21.8" fill="#fff" stroke="#e0e0e0" stroke-width="0.8"/>
<circle cx="462" cy="53.3" r="4.1" fill="none" stroke="#4f7099" stroke-width="1.2"/><path d="M459.1,56.3 L456.2,59.4" stroke="#4f7099" stroke-width="1.5"/>
<text x="461.2" y="78.3" font-size="10.3" fill="#555" text-anchor="middle" font-family='"Liberation Sans", sans-serif' textLength="27.5" lengthAdjust="spacingAndGlyphs" >Editing</text>
<path d="M459,85 L463,85 L461,87.5 Z" fill="#666"/>
<rect x="0" y="107.6" width="510" height="24.400000000000006" fill="#e6e6e6" />
<rect x="0" y="105.6" width="510" height="1.3" fill="#fbfbfb" />
<rect x="0" y="106.9" width="510" height="0.9" fill="#d9d9d9" />
<rect x="5.1" y="115.6" width="74.4" height="16.3" fill="#fff" stroke="#dedede" stroke-width="0.6"/>
<text x="8.6" y="127.6" font-size="9.4" fill="#505050" text-anchor="start" font-family='"Liberation Sans", sans-serif' textLength="10.8" lengthAdjust="spacingAndGlyphs" stroke="#505050" stroke-width="0.15">A1</text>
<path d="M70,123 L74,123 L72,125.5 Z" fill="#555"/>
<rect x="90" y="120" width="1.2" height="1.4" fill="#999" /><rect x="90" y="123.2" width="1.2" height="1.4" fill="#999" /><rect x="90" y="126.4" width="1.2" height="1.4" fill="#999" />
<rect x="102.5" y="115.5" width="80" height="16.5" fill="#fff"/>
<path d="M111,120 L119,128 M119,120 L111,128" stroke="#bbb" stroke-width="1"/>
<path d="M137,124 L140.5,127.5 L147,120.5" fill="none" stroke="#bbb" stroke-width="1.2"/>
<text x="163.8" y="127.8" font-size="11.5" fill="#555" text-anchor="start" font-family='"Liberation Serif", serif' textLength="9.5" lengthAdjust="spacingAndGlyphs" font-style="italic">fx</text>
<rect x="184" y="116" width="1" height="16" fill="#d0d0d0" />
<rect x="186" y="116" width="318.5" height="15.6" fill="#fff"/>
<text x="193.7" y="127.7" font-size="10" fill="#4a4a4a" text-anchor="start" font-family='"Liberation Sans", sans-serif' textLength="24" lengthAdjust="spacingAndGlyphs" >Client</text>
<path d="M496.8,122.3 L499.3,124.8 L501.8,122.3" fill="none" stroke="#666" stroke-width="1.2"/>
<rect x="0" y="132" width="510" height="24.30000000000001" fill="#e6e6e6" />
<rect x="29.3" y="156.3" width="464.3" height="238.59999999999997" fill="#fff" />
<rect x="0" y="156.3" width="29.3" height="238.59999999999997" fill="#e6e6e6" />
<path d="M15.3,154.3 L27.9,143.6 L27.9,154.3 Z" fill="#b5b5b5"/>
<rect x="29.3" y="176.75" width="464.3" height="1" fill="#dadada" />
<rect x="0" y="176.75" width="29.3" height="1" fill="#d0d0d0" />
<rect x="29.3" y="197.0" width="464.3" height="1" fill="#dadada" />
<rect x="0" y="197.0" width="29.3" height="1" fill="#d0d0d0" />
<rect x="29.3" y="217.25" width="464.3" height="1" fill="#dadada" />
<rect x="0" y="217.25" width="29.3" height="1" fill="#d0d0d0" />
<rect x="29.3" y="237.5" width="464.3" height="1" fill="#dadada" />
<rect x="0" y="237.5" width="29.3" height="1" fill="#d0d0d0" />
<rect x="29.3" y="257.75" width="464.3" height="1" fill="#dadada" />
<rect x="0" y="257.75" width="29.3" height="1" fill="#d0d0d0" />
<rect x="29.3" y="278.0" width="464.3" height="1" fill="#dadada" />
<rect x="0" y="278.0" width="29.3" height="1" fill="#d0d0d0" />
<rect x="29.3" y="298.25" width="464.3" height="1" fill="#dadada" />
<rect x="0" y="298.25" width="29.3" height="1" fill="#d0d0d0" />
<rect x="29.3" y="318.5" width="464.3" height="1" fill="#dadada" />
<rect x="0" y="318.5" width="29.3" height="1" fill="#d0d0d0" />
<rect x="29.3" y="338.75" width="464.3" height="1" fill="#dadada" />
<rect x="0" y="338.75" width="29.3" height="1" fill="#d0d0d0" />
<rect x="29.3" y="358.7" width="464.3" height="1" fill="#dadada" />
<rect x="0" y="358.7" width="29.3" height="1" fill="#d0d0d0" />
<rect x="29.3" y="377.2" width="464.3" height="1" fill="#dadada" />
<rect x="0" y="377.2" width="29.3" height="1" fill="#d0d0d0" />
<rect x="29.3" y="394.3" width="464.3" height="1" fill="#dadada" />
<rect x="0" y="394.3" width="29.3" height="1" fill="#d0d0d0" />
<rect x="111.0" y="156.3" width="1" height="238.59999999999997" fill="#dadada" />
<rect x="111.0" y="139" width="1" height="17.30000000000001" fill="#d0d0d0" />
<rect x="210.1" y="156.3" width="1" height="238.59999999999997" fill="#dadada" />
<rect x="210.1" y="139" width="1" height="17.30000000000001" fill="#d0d0d0" />
<rect x="305.9" y="156.3" width="1" height="238.59999999999997" fill="#dadada" />
<rect x="305.9" y="139" width="1" height="17.30000000000001" fill="#d0d0d0" />
<rect x="372.8" y="156.3" width="1" height="238.59999999999997" fill="#dadada" />
<rect x="372.8" y="139" width="1" height="17.30000000000001" fill="#d0d0d0" />
<rect x="439.0" y="156.3" width="1" height="238.59999999999997" fill="#dadada" />
<rect x="439.0" y="139" width="1" height="17.30000000000001" fill="#d0d0d0" />
<rect x="28.8" y="136" width="1" height="258.9" fill="#c4c4c4" />
<rect x="0" y="155.8" width="493.6" height="1" fill="#c4c4c4" />
<text x="70.4" y="153.4" font-size="14" fill="#2a2a2a" text-anchor="middle" font-family='"Liberation Sans", sans-serif' >A</text>
<text x="161.05" y="153.4" font-size="14" fill="#2a2a2a" text-anchor="middle" font-family='"Liberation Sans", sans-serif' >B</text>
<text x="258.5" y="153.4" font-size="14" fill="#2a2a2a" text-anchor="middle" font-family='"Liberation Sans", sans-serif' >C</text>
<text x="339.85" y="153.4" font-size="14" fill="#2a2a2a" text-anchor="middle" font-family='"Liberation Sans", sans-serif' >D</text>
<text x="406.4" y="153.4" font-size="14" fill="#2a2a2a" text-anchor="middle" font-family='"Liberation Sans", sans-serif' >E</text>
<text x="472.6" y="153.4" font-size="14" fill="#2a2a2a" text-anchor="middle" font-family='"Liberation Sans", sans-serif' >F</text>
<text x="15.15" y="172.20000000000002" font-size="14.6" fill="#2a2a2a" text-anchor="middle" font-family='"Liberation Sans", sans-serif' >1</text>
<text x="15.15" y="193.15" font-size="14.6" fill="#2a2a2a" text-anchor="middle" font-family='"Liberation Sans", sans-serif' >2</text>
<text x="15.15" y="213.4" font-size="14.6" fill="#2a2a2a" text-anchor="middle" font-family='"Liberation Sans", sans-serif' >3</text>
<text x="15.15" y="233.65" font-size="14.6" fill="#2a2a2a" text-anchor="middle" font-family='"Liberation Sans", sans-serif' >4</text>
<text x="15.15" y="253.9" font-size="14.6" fill="#2a2a2a" text-anchor="middle" font-family='"Liberation Sans", sans-serif' >5</text>
<text x="15.15" y="274.15" font-size="14.6" fill="#2a2a2a" text-anchor="middle" font-family='"Liberation Sans", sans-serif' >6</text>
<text x="15.15" y="294.4" font-size="14.6" fill="#2a2a2a" text-anchor="middle" font-family='"Liberation Sans", sans-serif' >7</text>
<text x="15.15" y="314.65" font-size="14.6" fill="#2a2a2a" text-anchor="middle" font-family='"Liberation Sans", sans-serif' >8</text>
<text x="15.15" y="334.9" font-size="14.6" fill="#2a2a2a" text-anchor="middle" font-family='"Liberation Sans", sans-serif' >9</text>
<text x="15.15" y="355.15" font-size="14.6" fill="#2a2a2a" text-anchor="middle" font-family='"Liberation Sans", sans-serif' >10</text>
<text x="15.15" y="375.09999999999997" font-size="14.6" fill="#2a2a2a" text-anchor="middle" font-family='"Liberation Sans", sans-serif' >11</text>
<text x="15.15" y="393.59999999999997" font-size="14.6" fill="#2a2a2a" text-anchor="middle" font-family='"Liberation Sans", sans-serif' >12</text>
<text x="32.3" y="172.4" font-size="13.7" fill="#222" font-weight="bold" text-anchor="start" font-family='"Liberation Sans", sans-serif' textLength="37.2" lengthAdjust="spacingAndGlyphs" >Client</text>
<text x="114.5" y="172.4" font-size="13.7" fill="#222" font-weight="bold" text-anchor="start" font-family='"Liberation Sans", sans-serif' textLength="57.6" lengthAdjust="spacingAndGlyphs" >Manager</text>
<text x="213.6" y="172.4" font-size="13.7" fill="#222" font-weight="bold" text-anchor="start" font-family='"Liberation Sans", sans-serif' textLength="90.6" lengthAdjust="spacingAndGlyphs" >Contract Price</text>
<text x="32.3" y="193.35" font-size="13.7" fill="#222" text-anchor="start" font-family='"Liberation Sans", sans-serif' textLength="72.6" lengthAdjust="spacingAndGlyphs" stroke="#222" stroke-width="0.2">A Company</text>
<text x="114.5" y="193.35" font-size="13.7" fill="#222" text-anchor="start" font-family='"Liberation Sans", sans-serif' textLength="69.8" lengthAdjust="spacingAndGlyphs" stroke="#222" stroke-width="0.2">John Smith</text>
<text x="303.9" y="193.35" font-size="13.7" fill="#222" text-anchor="end" font-family='"Liberation Sans", sans-serif' textLength="54.1" lengthAdjust="spacingAndGlyphs" stroke="#222" stroke-width="0.2">1200000</text>
<text x="32.3" y="213.6" font-size="13.7" fill="#222" text-anchor="start" font-family='"Liberation Sans", sans-serif' textLength="36" lengthAdjust="spacingAndGlyphs" stroke="#222" stroke-width="0.2">B Ltd.</text>
<text x="114.5" y="213.6" font-size="13.7" fill="#222" text-anchor="start" font-family='"Liberation Sans", sans-serif' textLength="69.8" lengthAdjust="spacingAndGlyphs" stroke="#222" stroke-width="0.2">John Smith</text>
<text x="303.9" y="213.6" font-size="13.7" fill="#222" text-anchor="end" font-family='"Liberation Sans", sans-serif' textLength="45.2" lengthAdjust="spacingAndGlyphs" stroke="#222" stroke-width="0.2">750000</text>
<text x="32.3" y="233.85" font-size="13.7" fill="#222" text-anchor="start" font-family='"Liberation Sans", sans-serif' textLength="36" lengthAdjust="spacingAndGlyphs" stroke="#222" stroke-width="0.2">C &amp; D</text>
<text x="114.5" y="233.85" font-size="13.7" fill="#222" text-anchor="start" font-family='"Liberation Sans", sans-serif' textLength="69.8" lengthAdjust="spacingAndGlyphs" stroke="#222" stroke-width="0.2">John Smith</text>
<text x="303.9" y="233.85" font-size="13.7" fill="#222" text-anchor="end" font-family='"Liberation Sans", sans-serif' textLength="45.2" lengthAdjust="spacingAndGlyphs" stroke="#222" stroke-width="0.2">350000</text>
<text x="32.3" y="254.1" font-size="13.7" fill="#222" text-anchor="start" font-family='"Liberation Sans", sans-serif' textLength="46" lengthAdjust="spacingAndGlyphs" stroke="#222" stroke-width="0.2">E Corp.</text>
<text x="114.5" y="254.1" font-size="13.7" fill="#222" text-anchor="start" font-family='"Liberation Sans", sans-serif' textLength="96.2" lengthAdjust="spacingAndGlyphs" stroke="#222" stroke-width="0.2">Tony Anderson</text>
<text x="303.9" y="254.1" font-size="13.7" fill="#222" text-anchor="end" font-family='"Liberation Sans", sans-serif' textLength="45.2" lengthAdjust="spacingAndGlyphs" stroke="#222" stroke-width="0.2">650000</text>
<text x="32.3" y="274.35" font-size="13.7" fill="#222" text-anchor="start" font-family='"Liberation Sans", sans-serif' textLength="78.3" lengthAdjust="spacingAndGlyphs" stroke="#222" stroke-width="0.2">F &amp; Partners</text>
<text x="114.5" y="274.35" font-size="13.7" fill="#222" text-anchor="start" font-family='"Liberation Sans", sans-serif' textLength="96.2" lengthAdjust="spacingAndGlyphs" stroke="#222" stroke-width="0.2">Tony Anderson</text>
<text x="303.9" y="274.35" font-size="13.7" fill="#222" text-anchor="end" font-family='"Liberation Sans", sans-serif' textLength="45.2" lengthAdjust="spacingAndGlyphs" stroke="#222" stroke-width="0.2">550000</text>
<text x="32.3" y="294.6" font-size="13.7" fill="#222" text-anchor="start" font-family='"Liberation Sans", sans-serif' textLength="48.1" lengthAdjust="spacingAndGlyphs" stroke="#222" stroke-width="0.2">G &amp; Co.</text>
<text x="114.5" y="294.6" font-size="13.7" fill="#222" text-anchor="start" font-family='"Liberation Sans", sans-serif' textLength="66.5" lengthAdjust="spacingAndGlyphs" stroke="#222" stroke-width="0.2">July James</text>
<text x="303.9" y="294.6" font-size="13.7" fill="#222" text-anchor="end" font-family='"Liberation Sans", sans-serif' textLength="45.2" lengthAdjust="spacingAndGlyphs" stroke="#222" stroke-width="0.2">350000</text>
<text x="32.3" y="314.85" font-size="13.7" fill="#222" text-anchor="start" font-family='"Liberation Sans", sans-serif' textLength="53.5" lengthAdjust="spacingAndGlyphs" stroke="#222" stroke-width="0.2">H Group</text>
<text x="114.5" y="314.85" font-size="13.7" fill="#222" text-anchor="start" font-family='"Liberation Sans", sans-serif' textLength="66.5" lengthAdjust="spacingAndGlyphs" stroke="#222" stroke-width="0.2">July James</text>
<text x="303.9" y="314.85" font-size="13.7" fill="#222" text-anchor="end" font-family='"Liberation Sans", sans-serif' textLength="45.2" lengthAdjust="spacingAndGlyphs" stroke="#222" stroke-width="0.2">250000</text>
<text x="32.3" y="335.1" font-size="13.7" fill="#222" text-anchor="start" font-family='"Liberation Sans", sans-serif' textLength="52.3" lengthAdjust="spacingAndGlyphs" stroke="#222" stroke-width="0.2">I &amp; Sons</text>
<text x="114.5" y="335.1" font-size="13.7" fill="#222" text-anchor="start" font-family='"Liberation Sans", sans-serif' textLength="66.5" lengthAdjust="spacingAndGlyphs" stroke="#222" stroke-width="0.2">July James</text>
<text x="303.9" y="335.1" font-size="13.7" fill="#222" text-anchor="end" font-family='"Liberation Sans", sans-serif' textLength="45.2" lengthAdjust="spacingAndGlyphs" stroke="#222" stroke-width="0.2">100000</text>
<text x="32.3" y="355.35" font-size="13.7" fill="#222" text-anchor="start" font-family='"Liberation Sans", sans-serif' textLength="33.9" lengthAdjust="spacingAndGlyphs" stroke="#222" stroke-width="0.2">J Ent.</text>
<text x="114.5" y="355.35" font-size="13.7" fill="#222" text-anchor="start" font-family='"Liberation Sans", sans-serif' textLength="66.5" lengthAdjust="spacingAndGlyphs" stroke="#222" stroke-width="0.2">July James</text>
<text x="303.9" y="355.35" font-size="13.7" fill="#222" text-anchor="end" font-family='"Liberation Sans", sans-serif' textLength="45.2" lengthAdjust="spacingAndGlyphs" stroke="#222" stroke-width="0.2">100000</text>
<rect x="493.6" y="132" width="16.399999999999977" height="262.9" fill="#e6e6e6" />
<rect x="494.1" y="156.3" width="1.6999999999999886" height="238.59999999999997" fill="#d4d4d4" />
<rect x="495.8" y="141.2" width="11" height="253.2" fill="#dcdcdc" />
<rect x="495.8" y="141.2" width="11" height="11.1" fill="#fff" />
<rect x="495.8" y="152.3" width="11" height="0.8" fill="#c8c8c8" />
<rect x="495.8" y="153.1" width="11" height="119.9" fill="#fff" />
<rect x="495.8" y="385.2" width="11" height="9.3" fill="#fff" />
<path d="M499.0,148.7 L501.5,146 L504.0,148.7 Z" fill="#555"/>
<path d="M499.0,388.8 L501.5,391.5 L504.0,388.8 Z" fill="#555"/>
<rect x="241.3" y="364.8" width="244.0" height="23.5" fill="#e6e6e6" />
<text x="242.5" y="381.9" font-size="15.8" fill="#222" text-anchor="start" font-family='"Liberation Mono", monospace' textLength="237.5" lengthAdjust="spacingAndGlyphs" stroke="#222" stroke-width="0.25">Destination_Workbook.xlsx</text>
<rect x="0" y="394.9" width="510" height="17.5" fill="#e6e6e6" />
<rect x="0" y="394.9" width="510" height="0.8" fill="#cfcfcf" />
<path d="M20,402 L17.5,404.5 L20,407" fill="none" stroke="#c4c4c4" stroke-width="1"/>
<path d="M35,402 L37.5,404.5 L35,407" fill="none" stroke="#c4c4c4" stroke-width="1"/>
<rect x="62" y="394.9" width="47.5" height="15.5" fill="#fff" />
<rect x="61.5" y="394.9" width="0.8" height="15.5" fill="#c8c8c8" /><rect x="109.2" y="394.9" width="0.8" height="15.5" fill="#c8c8c8" />
<rect x="62" y="409.8" width="47.5" height="1.4" fill="#2f6b4b" />
<text x="69.2" y="405.7" font-size="10.3" fill="#356b4f" font-weight="bold" text-anchor="start" font-family='"Liberation Sans", sans-serif' textLength="31.7" lengthAdjust="spacingAndGlyphs" >Sheet1</text>
<text x="118.7" y="406" font-size="10" fill="#555" text-anchor="start" font-family='"Liberation Sans", sans-serif' textLength="87.8" lengthAdjust="spacingAndGlyphs" >Evaluation Warning</text>
<rect x="216" y="398.5" width="0.9" height="11" fill="#bbb" />
<circle cx="241" cy="404.6" r="5.3" fill="none" stroke="#777" stroke-width="0.9"/><path d="M238,404.6 h6 M241,401.6 v6" stroke="#777" stroke-width="1"/>
<rect x="305" y="400" width="1" height="1.3" fill="#aaa" /><rect x="305" y="403.5" width="1" height="1.3" fill="#aaa" /><rect x="305" y="407" width="1" height="1.3" fill="#aaa" />
<rect x="316.2" y="398.6" width="177" height="10.7" fill="#dcdcdc" />
<rect x="316.2" y="398.6" width="9.1" height="10.7" fill="#fff" />
<rect x="326.4" y="398.6" width="115.90000000000003" height="10.7" fill="#fff" />
<rect x="482.8" y="398.6" width="10.2" height="10.7" fill="#fff" />
<path d="M322.5,401.5 L319.5,404 L322.5,406.5 Z" fill="#555"/>
<path d="M486.3,401.5 L489.3,404 L486.3,406.5 Z" fill="#555"/>
<rect x="0" y="412.4" width="510" height="16" fill="#f3f3f3" />
<rect x="0" y="411.6" width="510" height="0.8" fill="#dadada" />
<rect x="0" y="427.2" width="510" height="1.2" fill="#e9f0f3" />
<text x="5" y="424" font-size="9" fill="#555" text-anchor="start" font-family='"Liberation Sans", sans-serif' textLength="20.7" lengthAdjust="spacingAndGlyphs" >Ready</text>
<rect x="298" y="412.4" width="24" height="15.2" fill="#d5d5d5" />
<path d="M304.5,416 h9 v8.5 h-9 Z M304.5,418.8 h9 M304.5,421.6 h9 M307.5,416 v8.5 M310.5,416 v8.5" fill="none" stroke="#777" stroke-width="0.8"/>
<path d="M330,416 h8.5 v8.5 h-8.5 Z M332,416 v8.5 M336.5,416 v8.5" fill="none" stroke="#888" stroke-width="0.8"/><rect x="332" y="416.5" width="4.5" height="7.5" fill="#ccc"/>
<path d="M354.3,416 h8.5 v8.5 h-8.5 Z M354.3,421.5 h4.5 v-5.5" fill="none" stroke="#888" stroke-width="0.8"/>
<rect x="374" y="419.6" width="5" height="1.1" fill="#555" />
<rect x="382" y="420" width="74.7" height="0.8" fill="#bdbdbd" />
<rect x="422" y="416" width="3" height="8.5" fill="#555" />
<rect x="459.5" y="419.6" width="5.5" height="1.1" fill="#555" /><rect x="461.7" y="417.3" width="1.1" height="5.6" fill="#555" />
<text x="475.3" y="424" font-size="9" fill="#666" text-anchor="start" font-family='"Liberation Sans", sans-serif' textLength="21.1" lengthAdjust="spacingAndGlyphs" >140 %</text>
<rect x="0" y="0" width="1.3" height="41" fill="#3a8a78" />
<rect x="0" y="41" width="1.3" height="388" fill="#dfe9ec" />
<rect x="0" y="428.4" width="510" height="1.6" fill="#2b4a55" /></g>
<rect x="1021.6" y="0" width="2.4" height="430" fill="#3c9aa8"/>
</svg>
</body></html>
